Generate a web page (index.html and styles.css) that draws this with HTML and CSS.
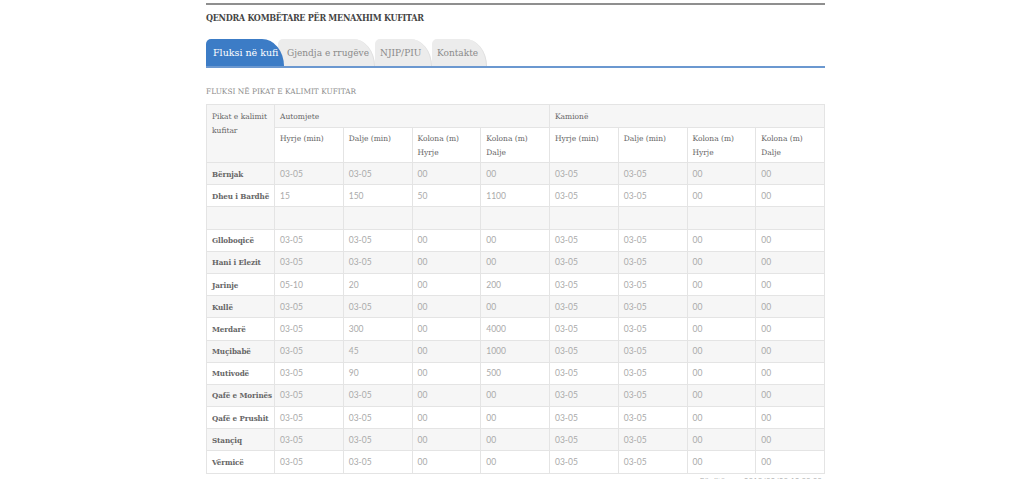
FILE: index.html
```html
<!DOCTYPE html>
<html lang="sq">
<head>
<meta charset="utf-8">
<title>Fluksi në kufi</title>
<link rel="stylesheet" href="styles.css">
</head>
<body>
<div class="page">
  <div class="topline"></div>
  <h1 class="title">QENDRA KOMBËTARE PËR MENAXHIM KUFITAR</h1>
  <nav class="tabs">
    <a class="tab active t1">Fluksi në kufi</a>
    <a class="tab t2">Gjendja e rrugëve</a>
    <a class="tab t3">NJIP/PIU</a>
    <a class="tab t4">Kontakte</a>
  </nav>
  <h2 class="subtitle">FLUKSI NË PIKAT E KALIMIT KUFITAR</h2>
  <table class="grid">
    <colgroup>
      <col class="c0"><col><col><col><col><col><col><col><col>
    </colgroup>
    <thead>
      <tr class="h1row">
        <th rowspan="2" class="lab">Pikat e kalimit kufitar</th>
        <th colspan="4">Automjete</th>
        <th colspan="4">Kamionë</th>
      </tr>
      <tr class="h2row">
        <th>Hyrje (min)</th><th>Dalje (min)</th><th>Kolona (m) Hyrje</th><th>Kolona (m) Dalje</th>
        <th>Hyrje (min)</th><th>Dalje (min)</th><th>Kolona (m) Hyrje</th><th>Kolona (m) Dalje</th>
      </tr>
    </thead>
    <tbody>
      <tr class="g"><th>Bërnjak</th><td>03-05</td><td>03-05</td><td>00</td><td>00</td><td>03-05</td><td>03-05</td><td>00</td><td>00</td></tr>
      <tr><th>Dheu i Bardhë</th><td>15</td><td>150</td><td>50</td><td>1100</td><td>03-05</td><td>03-05</td><td>00</td><td>00</td></tr>
      <tr class="g"><th></th><td></td><td></td><td></td><td></td><td></td><td></td><td></td><td></td></tr>
      <tr><th>Glloboqicë</th><td>03-05</td><td>03-05</td><td>00</td><td>00</td><td>03-05</td><td>03-05</td><td>00</td><td>00</td></tr>
      <tr class="g"><th>Hani i Elezit</th><td>03-05</td><td>03-05</td><td>00</td><td>00</td><td>03-05</td><td>03-05</td><td>00</td><td>00</td></tr>
      <tr><th>Jarinje</th><td>05-10</td><td>20</td><td>00</td><td>200</td><td>03-05</td><td>03-05</td><td>00</td><td>00</td></tr>
      <tr class="g"><th>Kullë</th><td>03-05</td><td>03-05</td><td>00</td><td>00</td><td>03-05</td><td>03-05</td><td>00</td><td>00</td></tr>
      <tr><th>Merdarë</th><td>03-05</td><td>300</td><td>00</td><td>4000</td><td>03-05</td><td>03-05</td><td>00</td><td>00</td></tr>
      <tr class="g"><th>Muçibabë</th><td>03-05</td><td>45</td><td>00</td><td>1000</td><td>03-05</td><td>03-05</td><td>00</td><td>00</td></tr>
      <tr><th>Mutivodë</th><td>03-05</td><td>90</td><td>00</td><td>500</td><td>03-05</td><td>03-05</td><td>00</td><td>00</td></tr>
      <tr class="g"><th>Qafë e Morinës</th><td>03-05</td><td>03-05</td><td>00</td><td>00</td><td>03-05</td><td>03-05</td><td>00</td><td>00</td></tr>
      <tr><th>Qafë e Prushit</th><td>03-05</td><td>03-05</td><td>00</td><td>00</td><td>03-05</td><td>03-05</td><td>00</td><td>00</td></tr>
      <tr class="g"><th>Stançiq</th><td>03-05</td><td>03-05</td><td>00</td><td>00</td><td>03-05</td><td>03-05</td><td>00</td><td>00</td></tr>
      <tr><th>Vërmicë</th><td>03-05</td><td>03-05</td><td>00</td><td>00</td><td>03-05</td><td>03-05</td><td>00</td><td>00</td></tr>
    </tbody>
  </table>
  <p class="updated">Përditësuar: 2019/02/20 12:00:00</p>
</div>
</body>
</html>
```

FILE: styles.css
```css
* { box-sizing: border-box; }
html, body { margin: 0; padding: 0; background: #ffffff; }
body { font-family: "DejaVu Serif", "Liberation Serif", serif; color: #555; }

.page {
  width: 619px;
  margin-left: 206px;
  padding-top: 3px;
}

.topline {
  height: 2px;
  background: #8f8f8f;
}

.title {
  margin: 7px 0 0 0;
  font-size: 9px;
  line-height: 12px;
  font-weight: bold;
  font-stretch: condensed;
  color: #444;
  letter-spacing: -0.3px;
}

.tabs {
  display: flex;
  margin-top: 15px;
  height: 27px;
  border-bottom: 2px solid #6b98d0;
  box-sizing: content-box;
}

.tab {
  display: block;
  flex: none;
  height: 27px;
  line-height: 28px;
  font-size: 9px;
  color: #8a8a8a;
  background: #ececec;
  padding-left: 5px;
  border-top-left-radius: 5px;
  border-top-right-radius: 22px 27px;
  border-right: 1px solid #dedede;
  white-space: nowrap;
  overflow: visible;
}
.tab.active {
  background: #3c7cc6;
  color: #fff;
  border-right: none;
  position: relative;
  z-index: 2;
  font-size: 9.5px;
  padding-left: 7px;
}
.t1 { width: 78px; }
.t2 { width: 97px; margin-left: -6px; padding-left: 9px; }
.t3 { width: 57px; }
.t4 { width: 55px; }

.subtitle {
  margin: 19px 0 0 0;
  font-size: 7.4px;
  line-height: 10px;
  font-weight: normal;
  color: #8a8a8a;
}

.grid {
  margin-top: 7px;
  width: 619px;
  border-collapse: collapse;
  table-layout: fixed;
  border: 1px solid #e4e4e4;
}
.grid col.c0 { width: 68px; }
.grid th, .grid td {
  border: 1px solid #e4e4e4;
  padding: 0 5px;
  font-size: 7.5px;
  text-align: left;
  vertical-align: middle;
  height: 22.2px;
}
.grid thead th {
  font-weight: normal;
  color: #666;
  vertical-align: top;
  line-height: 14px;
}
.grid .h1row th { height: 23px; padding-top: 5px; background: #f6f6f6; }
.grid .h2row th { height: 35px; padding-top: 4px; background: #fff; }
.grid thead th.lab { background: #f6f6f6; padding-top: 5px; }

.grid tbody th {
  font-weight: bold;
  color: #666;
  font-size: 8px;
  white-space: nowrap;
  font-stretch: condensed;
  letter-spacing: -0.1px;
}
.grid tbody td {
  font-family: "Lato", "Open Sans", sans-serif;
  font-size: 8.5px;
  color: #aaaaaa;
}
.grid tr.g th, .grid tr.g td { background: #f6f6f6; }

.updated {
  margin: 2px 3px 0 0;
  text-align: right;
  font-family: "Lato", sans-serif;
  font-size: 8px;
  color: #b0b0b0;
}
```
